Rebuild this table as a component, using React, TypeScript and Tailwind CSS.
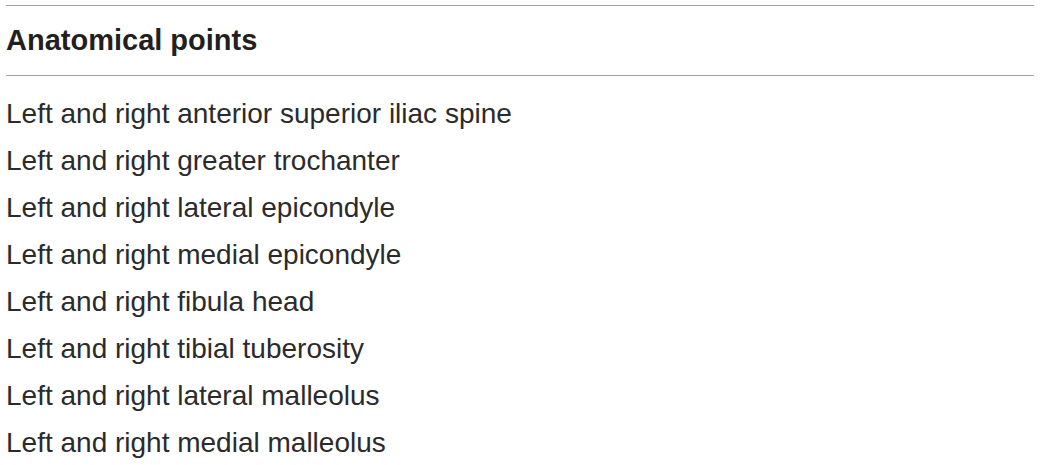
export default function App() {
  const rows = [
    "Left and right anterior superior iliac spine",
    "Left and right greater trochanter",
    "Left and right lateral epicondyle",
    "Left and right medial epicondyle",
    "Left and right fibula head",
    "Left and right tibial tuberosity",
    "Left and right lateral malleolus",
    "Left and right medial malleolus",
  ];
  return (
    <div
      className="w-[1040px] h-[465px] bg-white overflow-hidden pt-[5px] pl-[6px] pr-[6px] text-[#231f20]"
      style={{ fontFamily: '"Liberation Sans", Arial, sans-serif' }}
    >
      <div className="border-t border-[#a0a0a0]">
        <div className="h-[70px] flex items-center border-b border-[#a0a0a0]">
          <span className="text-[29px] font-bold leading-none">Anatomical points</span>
        </div>
        <div className="pt-[14px] text-[#2b2b2b]">
          {rows.map((r) => (
            <div key={r} className="h-[47px] flex items-center text-[28px] leading-none">
              {r}
            </div>
          ))}
        </div>
      </div>
    </div>
  );
}
